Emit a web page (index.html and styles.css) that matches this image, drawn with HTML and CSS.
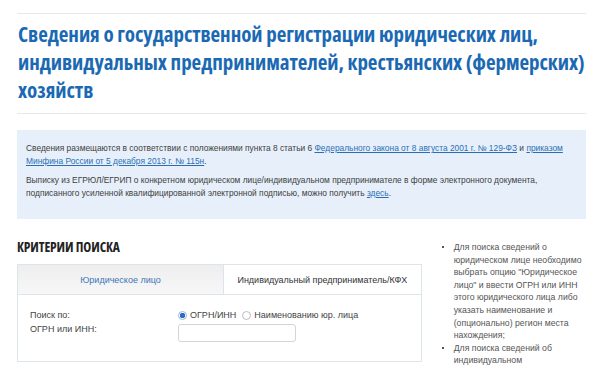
FILE: index.html
```html
<!DOCTYPE html>
<html lang="ru">
<head>
<meta charset="utf-8">
<link rel="stylesheet" href="styles.css">
</head>
<body>
<div class="page">
  <header class="head">
    <h1 class="title">Сведения о государственной регистрации юридических лиц, индивидуальных предпринимателей, крестьянских (фермерских) хозяйств</h1>
  </header>
  <section class="info">
    <p class="info-p">Сведения размещаются в соответствии с положениями пункта 8 статьи 6 <a href="#">Федерального закона от 8 августа 2001 г. № 129-ФЗ</a> и <a href="#">приказом Минфина России от 5 декабря 2013 г. № 115н</a>.</p>
    <p class="info-p">Выписку из ЕГРЮЛ/ЕГРИП о конкретном юридическом лице/индивидуальном предпринимателе в форме электронного документа, подписанного усиленной квалифицированной электронной подписью, можно получить <a href="#">здесь</a>.</p>
  </section>
  <div class="main">
    <div class="left">
      <h2 class="crit">КРИТЕРИИ ПОИСКА</h2>
      <div class="tabs">
        <div class="tab-row">
          <div class="tab tab-active">Юридическое лицо</div>
          <div class="tab">Индивидуальный предприниматель/КФХ</div>
        </div>
        <div class="form">
          <div class="row">
            <div class="lbl">Поиск по:</div>
            <div class="ctl">
              <span class="radio on"></span><span class="rtxt">ОГРН/ИНН</span>
              <span class="radio"></span><span class="rtxt">Наименованию юр. лица</span>
            </div>
          </div>
          <div class="row">
            <div class="lbl">ОГРН или ИНН:</div>
            <div class="ctl"><span class="input"></span></div>
          </div>
        </div>
      </div>
    </div>
    <ul class="hints">
      <li>Для поиска сведений о юридическом лице необходимо выбрать опцию "Юридическое лицо" и ввести ОГРН или ИНН этого юридического лица либо указать наименование и (опционально) регион места нахождения;</li>
      <li>Для поиска сведений об индивидуальном</li>
    </ul>
  </div>
</div>
</body>
</html>
```

FILE: styles.css
```css
html, body {
  margin: 0;
  padding: 0;
  background: #ffffff;
}
.page {
  width: 569px;
  padding: 13px 0 0 17px;
  font-family: "Liberation Sans", Arial, sans-serif;
  color: #444;
}
.head {
  border-top: 1px solid #e4e9ef;
  border-bottom: 1px solid #e4e9ef;
  padding: 6px 0 9px 1px;
}
.title {
  margin: 0 -20px 0 0;
  font-family: "Open Sans", sans-serif;
  font-stretch: 75%;
  font-weight: 700;
  font-size: 21px;
  line-height: 28px;
  letter-spacing: -0.05px;
  color: #1b69b3;
}
.info {
  margin-top: 16px;
  background: #e7f0fa;
  padding: 12px 10px 20px 9px;
  height: 57px;
}
.info-p {
  margin: 0 0 6px 0;
  font-size: 8.4px;
  line-height: 13px;
  color: #3e3e3e;
}
.info a {
  color: #2a6fb6;
}
.main {
  display: flex;
  margin-top: 19px;
}
.left {
  width: 410px;
}
.crit {
  margin: 0;
  font-family: "Open Sans", sans-serif;
  font-stretch: 75%;
  font-weight: 700;
  font-size: 13.5px;
  line-height: 18px;
  letter-spacing: -0.1px;
  color: #222;
}
.tabs {
  margin-top: 8px;
  border: 1px solid #dde5ec;
  height: 96px;
}
.tab-row {
  display: flex;
  height: 29px;
  border-bottom: 1px solid #dde5ec;
}
.tab {
  flex: 1;
  display: flex;
  align-items: center;
  justify-content: center;
  font-size: 9px;
  color: #333;
}
.tab-active {
  flex: 0 0 205px;
  background: linear-gradient(#eeeeee, #f7f7f7);
  border-right: 1px solid #dde5ec;
  color: #3a76b8;
}
.form {
  padding: 13px 0 0 12px;
}
.row {
  display: flex;
  align-items: center;
  height: 14px;
  font-size: 9px;
  color: #444;
}
.lbl {
  width: 148px;
}
.ctl {
  display: flex;
  align-items: center;
}
.radio {
  width: 7px;
  height: 7px;
  border: 1px solid #bbb;
  border-radius: 50%;
  background: #fff;
  margin-right: 3px;
  box-sizing: content-box;
}
.radio.on {
  border-color: #9fb8d6;
  background: radial-gradient(circle, #2a6fc0 0 2.5px, #fff 3px);
}
.rtxt {
  margin-right: 6px;
}
.input {
  display: block;
  width: 116px;
  height: 16px;
  border: 1px solid #d4d4d4;
  border-radius: 3px;
  margin-top: 8px;
  background: #fff;
}
.hints {
  margin: 3px 0 0 19px;
  padding: 0 0 0 13px;
  width: 134px;
  font-size: 8.7px;
  line-height: 12.6px;
  color: #555;
  list-style: none;
}
.hints li {
  position: relative;
  margin-bottom: 0;
}
.hints li::before {
  content: "";
  position: absolute;
  left: -12px;
  top: 5px;
  width: 2px;
  height: 2px;
  background: #555;
}
```
